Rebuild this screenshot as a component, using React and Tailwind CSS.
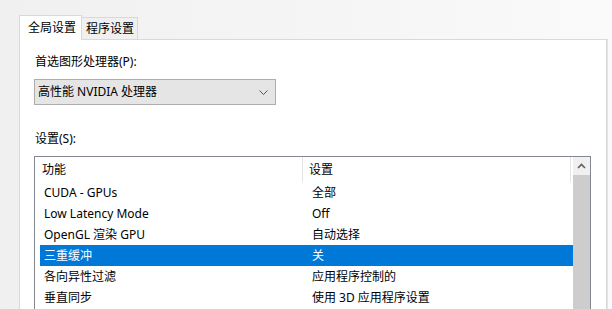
import React from 'react';

const rows = [
  { name: 'CUDA - GPUs', value: '全部' },
  { name: 'Low Latency Mode', value: 'Off' },
  { name: 'OpenGL 渲染 GPU', value: '自动选择' },
  { name: '三重缓冲', value: '关', selected: true },
  { name: '各向异性过滤', value: '应用程序控制的' },
  { name: '垂直同步', value: '使用 3D 应用程序设置' },
];

const font = { fontFamily: '"Noto Sans", "Noto Sans CJK SC", sans-serif' };

export default function App() {
  return (
    <div
      className="w-[612px] h-[309px] overflow-hidden bg-gradient-to-r from-[#f0f0f0] to-[#fafafa] pl-[19px] pt-[15px] text-[12px] text-black"
      style={font}
    >
      {/* Tabs */}
      <div className="flex items-start h-[25px] relative z-10">
        <div className="w-[63px] h-[25px] bg-white border border-b-0 border-[#d9d9d9] pl-[8px] leading-[23px]">
          全局设置
        </div>
        <div className="mt-[2px] w-[56px] h-[22px] bg-[#f0f0f0] border border-l-0 border-b-0 border-[#d9d9d9] pl-[4px] leading-[22px]">
          程序设置
        </div>
      </div>

      {/* Panel */}
      <div className="-mt-px w-[588px] h-[400px] bg-white border border-[#d9d9d9] shadow-[1px_0_0_#e3e3e3] pl-[14px]">
        <div className="mt-[14px] h-[16px] leading-[16px] pl-px">首选图形处理器(P):</div>

        <div className="mt-[9px] w-[242px] h-[26px] bg-[#e5e5e5] border border-[#adadad] flex items-center justify-between pl-[3px] pr-[6px]">
          <span className="leading-[16px]">高性能 NVIDIA 处理器</span>
          <svg width="9" height="5" viewBox="0 0 9 5" className="mr-px">
            <path d="M0.5 0.5 L4.5 4.5 L8.5 0.5" fill="none" stroke="#555" strokeWidth="1" />
          </svg>
        </div>

        <div className="mt-[26px] h-[16px] leading-[16px] pl-px">设置(S):</div>

        {/* List */}
        <div className="mt-[9px] w-[557px] h-[200px] border border-[#828790] flex">
          <div className="flex-1">
            <div className="h-[25px] flex">
              <div className="w-[268px] pl-[7px] leading-[25px] border-r border-[#e5e5e5]">功能</div>
              <div className="w-[268px] pl-[6px] leading-[25px] border-r border-[#e5e5e5]">设置</div>
            </div>
            {rows.map((r) => (
              <div
                key={r.name}
                className={
                  r.selected
                    ? 'ml-[5px] h-[21px] flex leading-[21px] bg-[#0078d7] text-white'
                    : 'ml-[5px] h-[21px] flex leading-[21px]'
                }
              >
                <div className="w-[272px] pl-[4px]">{r.name}</div>
                <div className="flex-1">{r.value}</div>
              </div>
            ))}
          </div>
          <div className="w-[17px] flex flex-col bg-[#f0f0f0]">
            <div className="h-[18px] flex items-center justify-center">
              <svg width="9" height="6" viewBox="0 0 9 6">
                <path d="M1 5 L4.5 1.5 L8 5" fill="none" stroke="#606060" strokeWidth="1.6" />
              </svg>
            </div>
            <div className="flex-1 bg-[#cdcdcd]" />
          </div>
        </div>
      </div>
    </div>
  );
}
